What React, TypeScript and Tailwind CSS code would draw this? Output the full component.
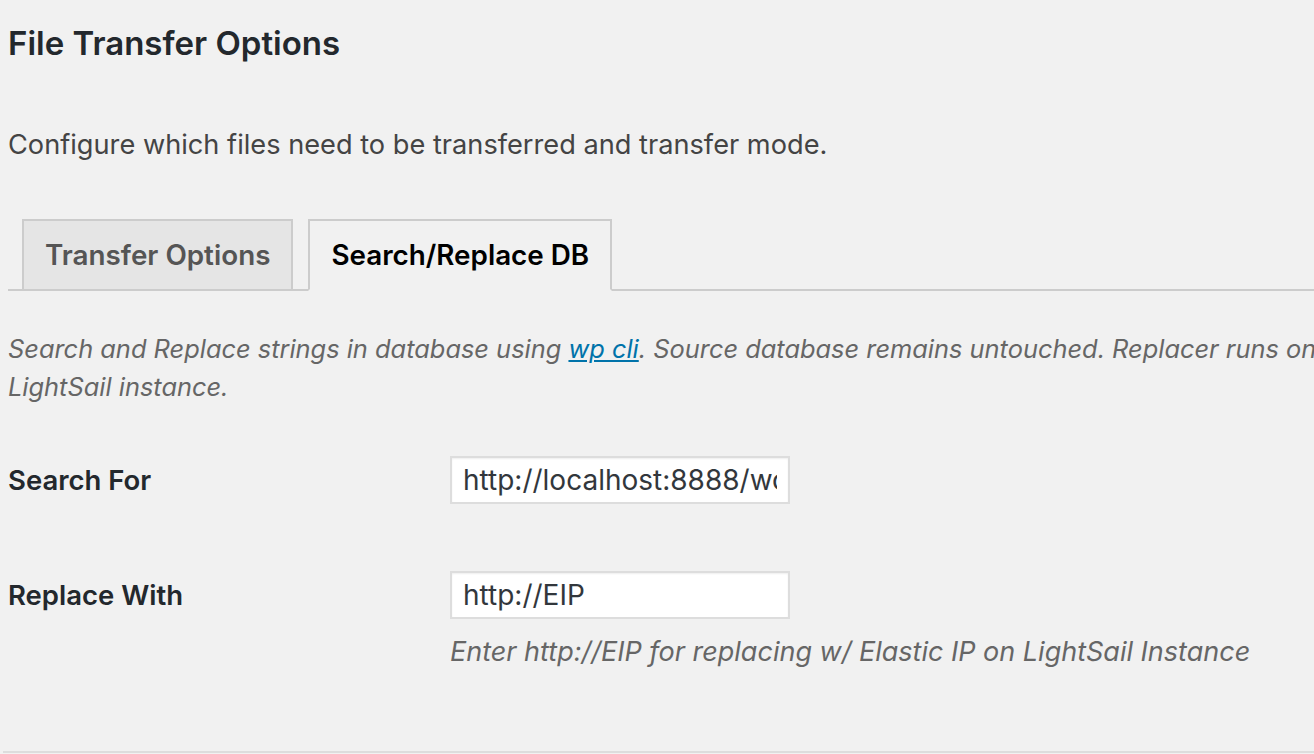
import React from 'react';

const App: React.FC = () => {
  const [tab, setTab] = React.useState<'transfer' | 'search'>('search');
  const [searchFor, setSearchFor] = React.useState('http://localhost:8888/wordpress');
  const [replaceWith, setReplaceWith] = React.useState('http://EIP');

  const tabs = [
    { id: 'transfer' as const, name: 'Transfer Options' },
    { id: 'search' as const, name: 'Search/Replace DB' },
  ];

  return (
    <div className="h-[754px] w-full overflow-hidden bg-[#f1f1f1] font-['Inter','Liberation_Sans',sans-serif]">
      <div className="pl-2 w-[1400px]">
        {/* Heading */}
        <h2 className="pt-[21px] text-[33px] leading-[44px] font-semibold text-[#23282d]">File Transfer Options</h2>
        <p className="mt-[61px] text-[27.2px] leading-[38px] text-[#444]">
          Configure which files need to be transferred and transfer mode.
        </p>

        {/* Tabs */}
        <nav className="mt-[55px] flex items-end gap-[15px] border-b-2 border-[#ccc] pl-[14px] w-[1306px]">
          {tabs.map((t) => {
            const isActive = tab === t.id;
            return (
              <button
                key={t.id}
                onClick={() => setTab(t.id)}
                className={`-mb-[2px] h-[72px] border-2 px-[21px] text-[27.8px] font-semibold leading-[68px] ${
                  isActive
                    ? 'border-[#ccc] border-b-[#f1f1f1] bg-[#f1f1f1] text-black'
                    : 'border-[#ccc] bg-[#e5e5e5] text-[#555]'
                }`}
              >
                {t.name}
              </button>
            );
          })}
        </nav>

        {/* Description */}
        <p className="mt-[39px] whitespace-nowrap text-[25.4px] italic leading-[38px] text-[#666]">
          Search and Replace strings in database using{' '}
          <a href="#" className="text-[#0073aa] underline">wp cli</a>. Source database remains untouched. Replacer runs on the
          <br />
          LightSail instance.
        </p>

        {/* Form */}
        <div className="mt-[50px] flex flex-col gap-[67px]">
          <div className="flex items-start">
            <label className="w-[442px] pt-[7px] text-[27.5px] font-semibold leading-[34px] text-[#23282d]">Search For</label>
            <input
              value={searchFor}
              onChange={(e) => setSearchFor(e.target.value)}
              className="h-[48px] w-[340px] border-2 border-[#ddd] bg-white px-[11px] text-[28px] text-[#32373c] shadow-[inset_0_1px_2px_rgba(0,0,0,0.07)] outline-none"
            />
          </div>
          <div className="flex items-start">
            <label className="w-[442px] pt-[7px] text-[27.5px] font-semibold leading-[34px] text-[#23282d]">Replace With</label>
            <div className="flex flex-col">
              <input
                value={replaceWith}
                onChange={(e) => setReplaceWith(e.target.value)}
                className="h-[48px] w-[340px] border-2 border-[#ddd] bg-white px-[11px] text-[28px] text-[#32373c] shadow-[inset_0_1px_2px_rgba(0,0,0,0.07)] outline-none"
              />
              <p className="mt-[14px] whitespace-nowrap text-[27px] italic leading-[38px] text-[#666]">
                Enter http://EIP for replacing w/ Elastic IP on LightSail Instance
              </p>
            </div>
          </div>
        </div>

        <hr className="mt-[80px] ml-[-5px] border-t-2 border-[#ddd]" />
      </div>
    </div>
  );
};

export default App;
